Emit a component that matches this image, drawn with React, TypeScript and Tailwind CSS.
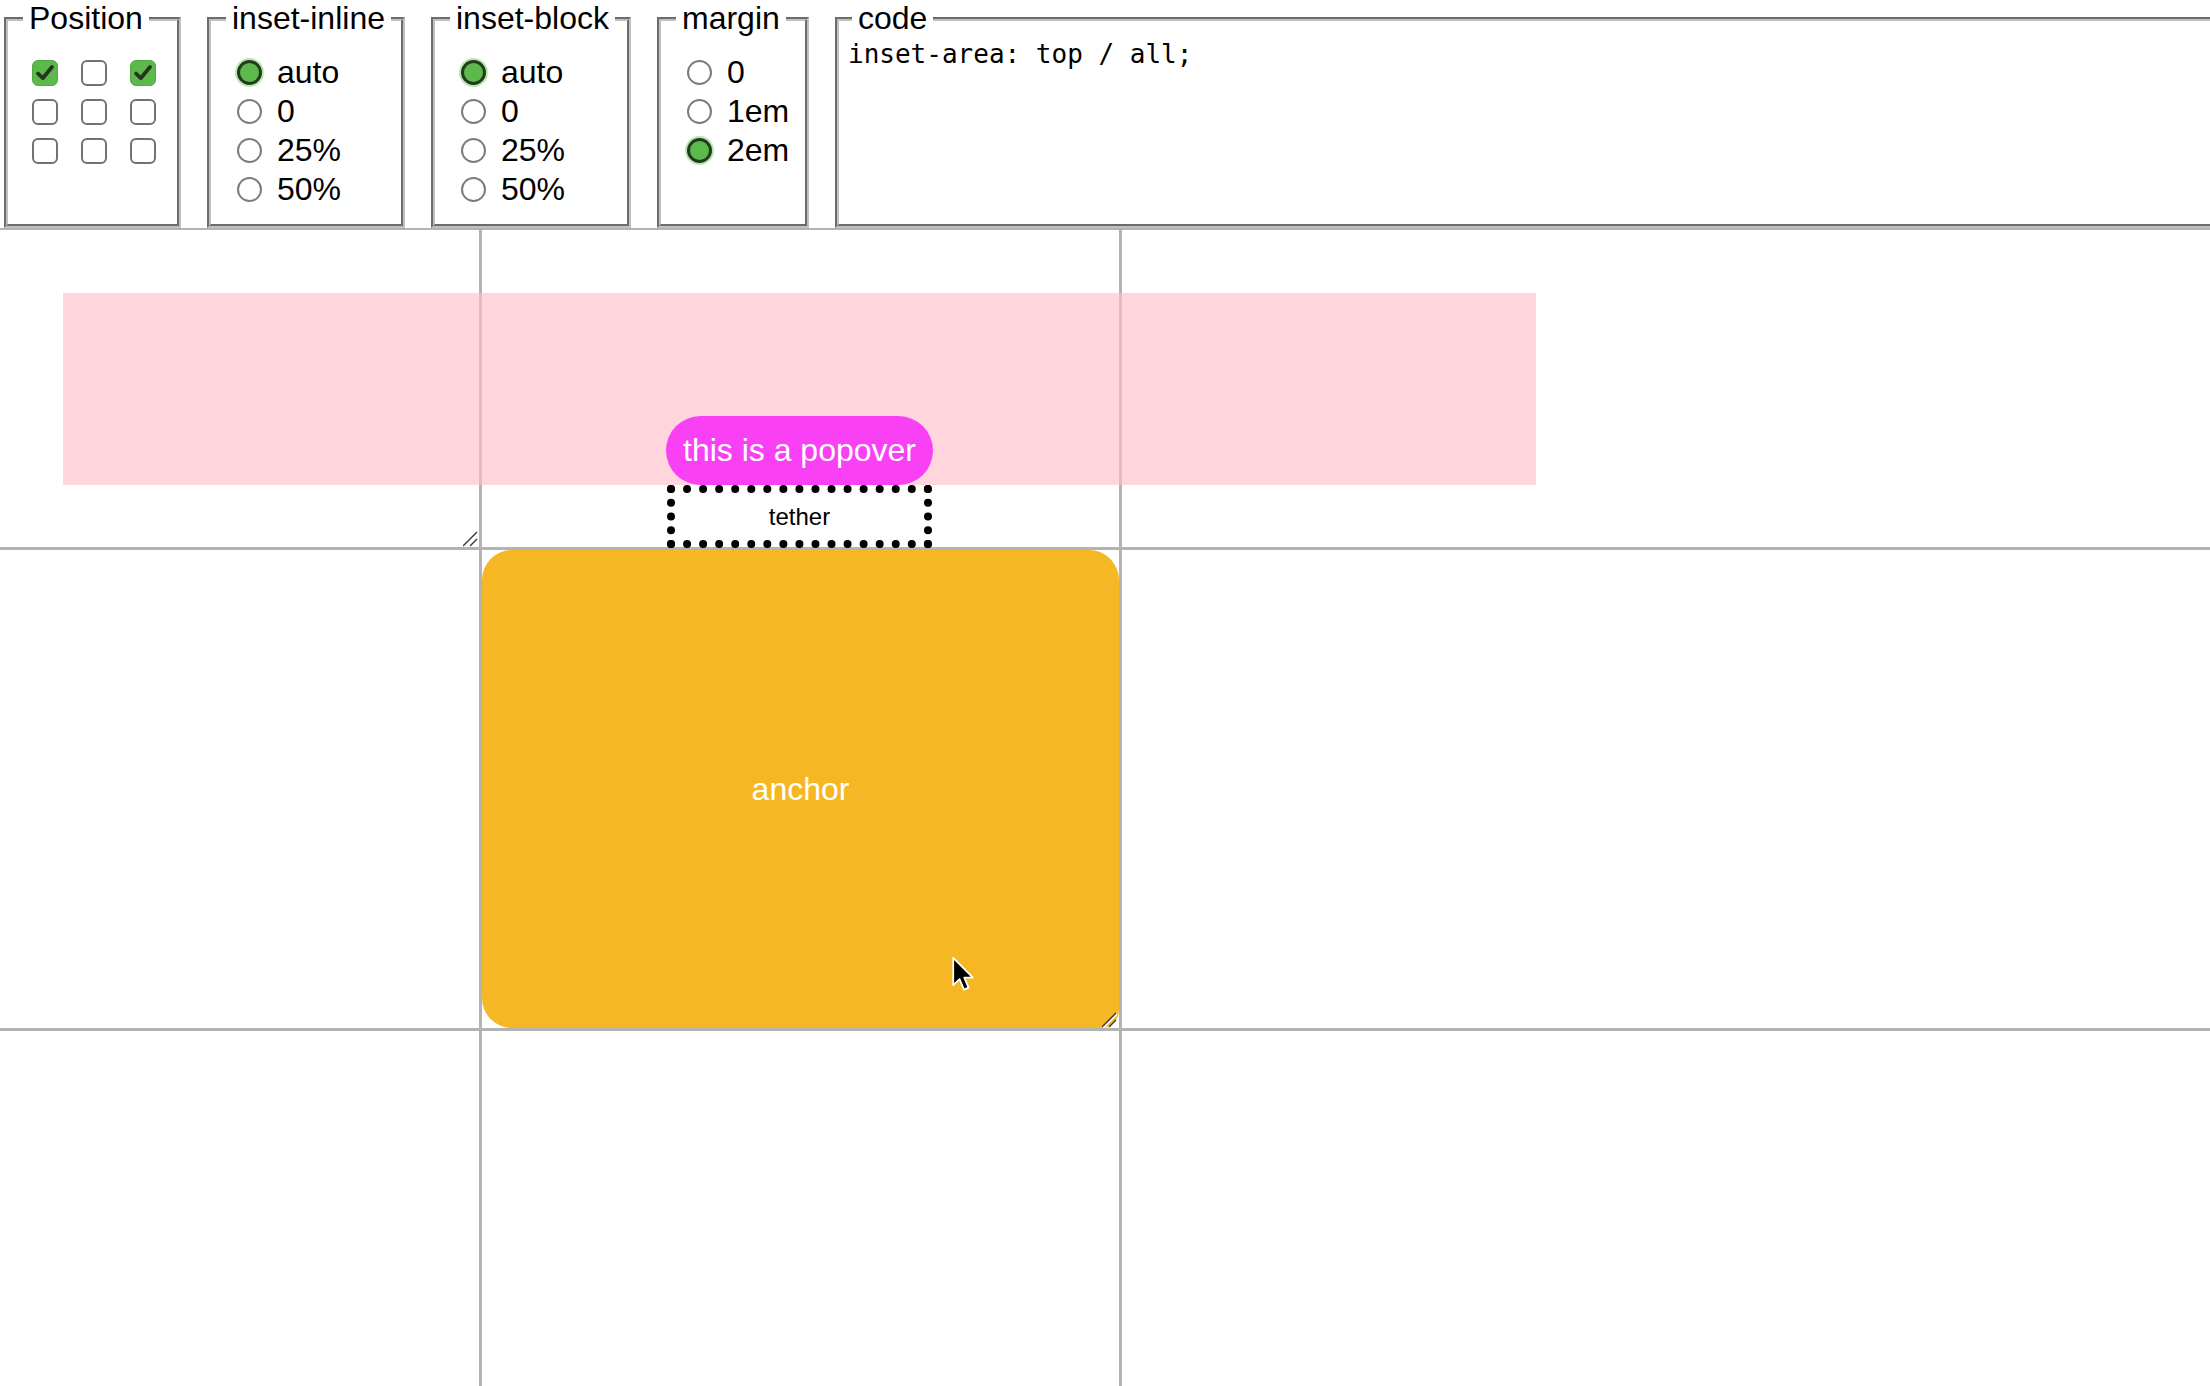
import React from "react";

function Check({ checked }: { checked?: boolean }) {
  if (checked) {
    return (
      <div className="w-[26px] h-[26px] rounded-[6px] bg-[#5cb94b] border border-[#52a843] flex items-center justify-center">
        <svg width="22" height="22" viewBox="0 0 22 22">
          <path d="M4 11.5 L8.8 16.2 L18 5" fill="none" stroke="#263522" strokeWidth="3.8" strokeLinecap="round" strokeLinejoin="round" />
        </svg>
      </div>
    );
  }
  return <div className="w-[26px] h-[26px] rounded-[6px] bg-white border-2 border-[#727272]" />;
}

function Radio({ checked }: { checked?: boolean }) {
  if (checked) {
    return (
      <div className="w-[25px] h-[25px] rounded-full bg-[#5db94d] border-[3px] border-[#1f3d1b] shadow-[0_0_0_2px_rgba(120,205,100,0.5)] shrink-0" />
    );
  }
  return <div className="w-[25px] h-[25px] rounded-full bg-white border-2 border-[#7c7c7c] shrink-0" />;
}

function RadioSet({ title, items, selected, width }: { title: string; items: string[]; selected: number; width: string }) {
  return (
    <fieldset className={`shrink-0 ${width} border-4 [border-style:groove] border-[#c0c0c0] pl-[15px] pb-[15px]`}>
      <legend className="px-[6px] text-[32px] leading-[37px]">{title}</legend>
      <div className="pt-[16px] pl-[11px] flex flex-col">
        {items.map((it, i) => (
          <div key={it} className="h-[39px] flex items-center gap-[15px] text-[32px] leading-[37px]">
            <Radio checked={i === selected} />
            <span>{it}</span>
          </div>
        ))}
      </div>
    </fieldset>
  );
}

function Grip() {
  return (
    <svg width="16" height="16" viewBox="0 0 16 16">
      <path d="M1 16 L15 2" stroke="#ffffff" strokeWidth="2" />
      <path d="M0 15 L14 1" stroke="#3a3a3a" strokeWidth="1.4" />
      <path d="M8 16 L15 9" stroke="#ffffff" strokeWidth="2" />
      <path d="M7 15 L14 8" stroke="#3a3a3a" strokeWidth="1.4" />
    </svg>
  );
}

export default function App() {
  const pos = [true, false, true, false, false, false, false, false, false];
  return (
    <div className="relative w-[2210px] h-[1386px] overflow-hidden bg-white text-black font-['Liberation_Sans',Arial,sans-serif]">
      <div className="flex gap-[26px] pl-[4px]">
        <fieldset className="shrink-0 w-[177px] border-4 [border-style:groove] border-[#c0c0c0] pl-[15px] pb-[15px]">
          <legend className="px-[6px] text-[32px] leading-[37px]">Position</legend>
          <div className="pt-[16px] pl-[9px] grid grid-cols-[26px_26px_26px] gap-x-[23px]">
            {pos.map((c, i) => (
              <div key={i} className="h-[39px] flex items-center">
                <Check checked={c} />
              </div>
            ))}
          </div>
        </fieldset>
        <RadioSet title="inset-inline" items={["auto", "0", "25%", "50%"]} selected={0} width="w-[198px]" />
        <RadioSet title="inset-block" items={["auto", "0", "25%", "50%"]} selected={0} width="w-[200px]" />
        <RadioSet title="margin" items={["0", "1em", "2em"]} selected={2} width="w-[152px]" />
        <fieldset className="shrink-0 w-[1500px] border-4 [border-style:groove] border-[#c0c0c0] pl-[9px]">
          <legend className="ml-[4px] px-[6px] text-[32px] leading-[37px]">code</legend>
          <pre className="pt-[2px] font-['DejaVu_Sans_Mono',monospace] text-[26px] leading-[30px]">inset-area: top / all;</pre>
        </fieldset>
      </div>

      <div className="relative grid grid-cols-[479px_637px_1fr] grid-rows-[317px_478px_1fr] gap-[3px] bg-[#b3b3b3] pt-[2px] h-[1158px]">
        <div className="relative bg-white">
          <div className="absolute right-0 bottom-0 leading-none">
            <Grip />
          </div>
        </div>
        <div className="bg-white" />
        <div className="bg-white" />
        <div className="bg-white" />
        <div className="relative bg-white">
          <div className="w-full h-full rounded-[30px] rounded-br-[18px] bg-[#f5b724] flex items-center justify-center text-white text-[32px]">
            anchor
          </div>
          <div className="absolute right-[1px] bottom-0 leading-none">
            <Grip />
          </div>
        </div>
        <div className="bg-white" />
        <div className="bg-white" />
        <div className="bg-white" />
        <div className="bg-white" />

        <div className="absolute left-[63px] top-[65px] w-[1473px] h-[192px] bg-[#ffc0cb]/65 flex items-end justify-center">
          <div className="h-[69px] px-[17px] rounded-full bg-[#fa40f5] text-white text-[32px] leading-[37px] flex items-center">
            this is a popover
          </div>
        </div>
        <div className="absolute left-[667px] top-[257px] w-[265px] h-[63px] border-[8px] border-dotted border-black flex items-center justify-center text-[24px] leading-[28px]">
          tether
        </div>
      </div>

      <svg className="absolute left-[951px] top-[956px]" width="26" height="38" viewBox="0 0 20 30">
        <path d="M1.5 1.5 L1.5 23 L6.5 18.2 L10 26.5 L13.6 25 L10.2 17 L17 17 Z" fill="#000" stroke="#fff" strokeWidth="1.4" strokeLinejoin="round" />
      </svg>
    </div>
  );
}
